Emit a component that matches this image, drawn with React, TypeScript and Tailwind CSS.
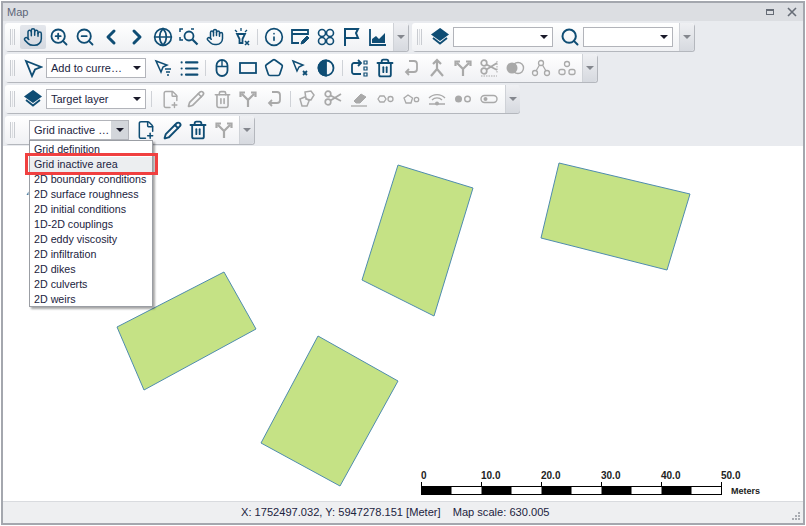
import type { ReactNode } from 'react';
import { ChevronLeft, ChevronRight, Globe, Hand, Info, List, Pencil, Search, Trash2, ZoomIn, ZoomOut, Pentagon, FilePlus2 } from 'lucide-react';

const menuItems = [
  'Grid definition',
  'Grid inactive area',
  '2D boundary conditions',
  '2D surface roughness',
  '2D initial conditions',
  '1D-2D couplings',
  '2D eddy viscosity',
  '2D infiltration',
  '2D dikes',
  '2D culverts',
  '2D weirs',
];

function Svg({ children }: { children: ReactNode }) {
  return (
    <svg viewBox="0 0 20 20" width="20" height="20" fill="none" stroke="currentColor" strokeWidth="1.8">
      {children}
    </svg>
  );
}

function Btn({ children, off, active }: { children: ReactNode; off?: boolean; active?: boolean }) {
  return (
    <div
      className={`w-[26px] h-[24px] flex items-center justify-center shrink-0 ${off ? 'text-[#a9a9a9]' : 'text-[#0f4d74]'} ${active ? 'bg-gradient-to-b from-[#e4e7ec] to-[#d5d9e0] rounded-[2px]' : ''}`}
    >
      {children}
    </div>
  );
}

function Sep({ w = 7 }: { w?: number }) {
  return (
    <div className={`flex justify-center shrink-0 ${w === 11 ? 'w-[11px]' : 'w-[7px]'}`}>
      <div className="w-px h-[16px] bg-[#cfd2d7]" />
    </div>
  );
}

function Arrow({ gray }: { gray?: boolean }) {
  return (
    <div
      className={`w-0 h-0 border-l-[4px] border-r-[4px] border-t-[4px] border-l-transparent border-r-transparent ${gray ? 'border-t-[#84878e]' : 'border-t-[#1a1a2a]'}`}
    />
  );
}

function Toolbar({ children, className }: { children: ReactNode; className?: string }) {
  return (
    <div className={`h-[28px] flex items-center rounded-[3px] bg-gradient-to-b from-white to-[#f0f1f4] shadow-[1px_1px_0_#b4b7bd] ${className ?? ''}`}>
      <div className="w-[15px] h-full shrink-0 flex items-center justify-center gap-px">
        <div className="w-px h-[16px] bg-[#c9ccd1]" />
        <div className="w-px h-[16px] bg-[#dcdee2]" />
        <div className="w-px h-[16px] bg-[#c9ccd1]" />
      </div>
      {children}
    </div>
  );
}

function More({ className }: { className?: string }) {
  return (
    <div className={`w-[15px] h-full shrink-0 flex items-center justify-center border-l border-[#cfd2d7] rounded-r-[3px] bg-gradient-to-b from-[#eff0f3] to-[#d6d9df] ${className ?? ''}`}>
      <Arrow gray />
    </div>
  );
}

function Combo({ text, w = 'w-[100px]', button }: { text?: string; w?: string; button?: boolean }) {
  return (
    <div className={`${w} h-[20px] shrink-0 flex items-center bg-white border border-[#b2b4ba] text-[11px] text-[#1b2340]`}>
      <span className="flex-1 min-w-0 pl-[4px] whitespace-nowrap">{text}</span>
      <div className={`w-[17px] h-full shrink-0 flex items-center justify-center ${button ? 'bg-[#d3d6db]' : ''}`}>
        <Arrow />
      </div>
    </div>
  );
}

const LayersIco = () => (
  <Svg>
    <path d="M10 2 17.500 7.500 10 13 2.500 7.500Z" fill="currentColor" />
    <path d="M3 11 10 16.500 17 11" />
  </Svg>
);
const SplitIco = () => (
  <Svg>
    <path d="M10 18v-7L4 5M10 11l6-6M2.500 8V3.500H7M17.500 8V3.500H13" strokeWidth="2.200" />
  </Svg>
);
const UndoIco = () => (
  <Svg>
    <path d="M8 3h5a3 3 0 0 1 3 3v5a3 3 0 0 1-3 3H5M8 11l-3 3 3 3" />
  </Svg>
);
const ScissorsIco = ({ dashed }: { dashed?: boolean }) => (
  <Svg>
    <circle cx="5" cy="5" r="2.800" strokeWidth="1.700" />
    <circle cx="5" cy="13" r="2.800" strokeWidth="1.700" />
    <path d="M7.500 6.500 18 12M7.500 11.500 18 5" strokeWidth="1.800" />
    {dashed && <path d="M2 18h16M18 3v12" strokeWidth="1" strokeDasharray="1.500 1" />}
  </Svg>
);

export default function App() {
  return (
    <div className="w-[806px] h-[526px] bg-white p-px font-['Liberation_Sans',Arial,sans-serif]">
      <div className="w-full h-full border-2 border-[#a4a7ae] flex flex-col overflow-hidden">
        <div className="h-[18px] shrink-0 bg-[#dcdee2] flex items-center pl-[4px] pr-[4px] text-[11px] text-[#5c6678]">
          <span className="flex-1">Map</span>
          <div className="w-[8px] h-[6px] border border-t-2 border-[#666c76] mr-[13px]" />
          <svg viewBox="0 0 10 10" width="10" height="10" className="mr-[2px]" stroke="#666c76" strokeWidth="1.600">
            <path d="M1 1 9 9M9 1 1 9" />
          </svg>
        </div>

        <div className="h-[125px] shrink-0 bg-[#e9ebef] pl-[2px] pt-[2px] flex flex-col gap-[3px]">
          <div className="flex gap-[4px]">
            <Toolbar>
              <Btn active><Hand size={20} strokeWidth={1.800} /></Btn>
              <Btn><ZoomIn size={20} strokeWidth={2.200} /></Btn>
              <Btn><ZoomOut size={20} strokeWidth={2.200} /></Btn>
              <Btn><ChevronLeft size={24} strokeWidth={3} /></Btn>
              <Btn><ChevronRight size={24} strokeWidth={3} /></Btn>
              <Btn><Globe size={20} strokeWidth={2} /></Btn>
              <Btn>
                <Svg>
                  <path d="M1 5V2h3M12 2h3M1 10v3h3" strokeWidth="1.500" />
                  <circle cx="10" cy="9" r="4.500" />
                  <path d="m13.500 12.500 5 5" strokeWidth="2.200" />
                </Svg>
              </Btn>
              <Btn><Hand size={18} strokeWidth={2} /></Btn>
              <Btn>
                <Svg>
                  <path d="M6 7h8l-2.500 5v4h-3v-4Z" />
                  <path d="M10 1v3M4 3l2 2M16 3l-2 2" strokeWidth="1.300" />
                  <path d="m14 14 4 4M18 14l-4 4" strokeWidth="1.600" />
                </Svg>
              </Btn>
              <Sep />
              <Btn><Info size={20} strokeWidth={2} /></Btn>
              <Btn>
                <Svg>
                  <path d="M9 16H2V3h16v5M2 7h16" />
                  <path d="m11 17 1-3 5-5 2 2-5 5Z" fill="currentColor" strokeWidth="1" />
                </Svg>
              </Btn>
              <Btn>
                <Svg>
                  <circle cx="6" cy="6" r="3.500" strokeWidth="1.600" />
                  <circle cx="14" cy="6" r="3.500" strokeWidth="1.600" />
                  <circle cx="6" cy="14" r="3.500" strokeWidth="1.600" />
                  <circle cx="14" cy="14" r="3.500" strokeWidth="1.600" />
                </Svg>
              </Btn>
              <Btn>
                <Svg>
                  <path d="M3 19V2h13l-2 4 2 5H3" strokeWidth="2" />
                </Svg>
              </Btn>
              <Btn>
                <Svg>
                  <path d="M2 2v16h16" />
                  <path d="M4 16v-4l4-3 3 3 6-6v10Z" fill="currentColor" stroke="none" />
                </Svg>
              </Btn>
              <More className="ml-[2px]" />
            </Toolbar>
            <Toolbar>
              <Btn><LayersIco /></Btn>
              <Combo />
              <div className="w-[4px]" />
              <Btn><Search size={20} strokeWidth={2.400} /></Btn>
              <Combo w="w-[90px]" />
              <More className="ml-[6px]" />
            </Toolbar>
          </div>

          <Toolbar className="w-[592px]">
            <Btn>
              <Svg>
                <path d="M3 3 18 9l-6 2.500L9 18Z" />
              </Svg>
            </Btn>
            <Combo text="Add to curre…" />
            <div className="w-[5px]" />
            <Btn>
              <Svg>
                <path d="M3 3 14 7l-4 2-2 5Z" strokeWidth="1.500" />
                <path d="M12 11h6M13 14h4M14 17h2" strokeWidth="1.400" />
              </Svg>
            </Btn>
            <Btn><List size={21} strokeWidth={2.400} /></Btn>
            <Sep />
            <Btn>
              <Svg>
                <rect x="4.500" y="2" width="11" height="16" rx="5.500" />
                <path d="M10 2v6M5 8.500h10" strokeWidth="1.400" />
              </Svg>
            </Btn>
            <Btn>
              <Svg>
                <rect x="2" y="5" width="16" height="10" />
              </Svg>
            </Btn>
            <Btn><Pentagon size={20} strokeWidth={2} /></Btn>
            <Btn>
              <Svg>
                <path d="M3 3 13 7l-4 2-2 4Z" strokeWidth="1.500" />
                <path d="m13 13 4 4M17 13l-4 4" />
              </Svg>
            </Btn>
            <Btn>
              <Svg>
                <circle cx="10" cy="10" r="7.500" />
                <path d="M10 2.500a7.500 7.500 0 0 0 0 15Z" fill="currentColor" />
              </Svg>
            </Btn>
            <Sep />
            <Btn>
              <Svg>
                <path d="M12 16H5a2 2 0 0 1-2-2V7a2 2 0 0 1 2-2h7M9 2l3 3-3 3" />
                <path d="M15 3h3v3h-3zM15 9h3v3h-3zM15 15h3v3h-3z" strokeWidth="1.200" />
              </Svg>
            </Btn>
            <Btn><Trash2 size={20} strokeWidth={2.200} /></Btn>
            <Btn off><UndoIco /></Btn>
            <Btn off>
              <Svg>
                <path d="M10 2v9L4 18M10 11l6 7M6 6l4-4 4 4" strokeWidth="2.200" />
              </Svg>
            </Btn>
            <Btn off><SplitIco /></Btn>
            <Btn off><ScissorsIco dashed /></Btn>
            <Btn off>
              <Svg>
                <circle cx="7" cy="10" r="5.500" fill="currentColor" stroke="none" />
                <circle cx="13" cy="10" r="5.500" strokeWidth="1.400" />
              </Svg>
            </Btn>
            <Btn off>
              <Svg>
                <path d="M8.500 7 5 13M11.500 7l3.500 6" strokeWidth="1.300" />
                <circle cx="10" cy="5" r="2.500" strokeWidth="1.300" />
                <circle cx="4" cy="15" r="2.500" strokeWidth="1.300" />
                <circle cx="16" cy="15" r="2.500" strokeWidth="1.300" />
              </Svg>
            </Btn>
            <Btn off>
              <Svg>
                <circle cx="10" cy="6" r="2.500" strokeWidth="1.300" />
                <rect x="2" y="11.500" width="6" height="5" strokeWidth="1.300" rx="2" />
                <rect x="12" y="11.500" width="6" height="5" strokeWidth="1.300" rx="2" />
              </Svg>
            </Btn>
            <More className="ml-[2px]" />
          </Toolbar>

          <Toolbar className="w-[514px]">
            <Btn><LayersIco /></Btn>
            <Combo text="Target layer" />
            <Sep w={11} />
            <Btn off><FilePlus2 size={19} strokeWidth={1.800} /></Btn>
            <Btn off><Pencil size={18} strokeWidth={2.200} /></Btn>
            <Btn off><Trash2 size={19} strokeWidth={2} /></Btn>
            <Btn off><SplitIco /></Btn>
            <Btn off><UndoIco /></Btn>
            <Sep />
            <Btn off>
              <Svg>
                <path d="m8 3 6-1 3 4-3 5-5-1ZM3 10l5-2 4 4-2 5-5 0Z" strokeWidth="1.500" />
              </Svg>
            </Btn>
            <Btn off><ScissorsIco /></Btn>
            <Btn off>
              <Svg>
                <path d="m5 12 7-7 5 3-6 6H7Z" fill="currentColor" strokeWidth="1" />
                <path d="M2 17h16" strokeWidth="1.300" />
              </Svg>
            </Btn>
            <Btn off>
              <Svg>
                <path d="m3 10 2-3h4l2 3-2 3H5Z" strokeWidth="1.300" />
                <circle cx="15.500" cy="10" r="2.500" strokeWidth="1.300" />
              </Svg>
            </Btn>
            <Btn off>
              <Svg>
                <path d="m7 6 4.500 3-1.500 5H5L3 9Z" strokeWidth="1.300" />
                <circle cx="15.500" cy="10.500" r="2.200" strokeWidth="1.300" />
              </Svg>
            </Btn>
            <Btn off>
              <Svg>
                <path d="M2 9a11 11 0 0 1 16 0M5 11a7 7 0 0 1 10 0M2 15h16" strokeWidth="1.300" />
                <circle cx="10" cy="14.500" r="2" fill="currentColor" stroke="none" />
              </Svg>
            </Btn>
            <Btn off>
              <Svg>
                <circle cx="5.500" cy="10" r="3.500" fill="currentColor" stroke="none" />
                <circle cx="14.500" cy="10" r="2.800" strokeWidth="1.400" />
              </Svg>
            </Btn>
            <Btn off>
              <Svg>
                <rect x="2" y="6.500" width="16" height="7" rx="3.500" strokeWidth="1.400" />
                <circle cx="6.500" cy="10" r="2" fill="currentColor" stroke="none" />
              </Svg>
            </Btn>
            <More className="ml-[3px]" />
          </Toolbar>

          <Toolbar className="w-[249px]">
            <div className="w-[9px]" />
            <Combo text="Grid inactive …" button />
            <div className="w-[4px]" />
            <Btn><FilePlus2 size={20} strokeWidth={1.800} /></Btn>
            <Btn><Pencil size={19} strokeWidth={2.400} /></Btn>
            <Btn><Trash2 size={20} strokeWidth={2.200} /></Btn>
            <Btn off><SplitIco /></Btn>
            <More className="ml-[2px]" />
          </Toolbar>
        </div>

        <div className="relative flex-1 bg-white">
          <svg width="802" height="355" viewBox="3 146 802 355" className="block">
            <g fill="#c5e285" stroke="#4f8cae" strokeWidth="1">
              <polygon points="398,165 473,188 434,316 362,280" />
              <polygon points="559,163 690,194 667,270 541,238" />
              <polygon points="224,272 256,329 144,390 117,327" />
              <polygon points="318,336 398,381 340,486 261,443" />
            </g>
            <path d="M26.500 195 28.500 191.500V195Z" fill="#4f7fa0" />
            <rect x="421.500" y="486.500" width="300" height="8" fill="#fff" stroke="#000" />
            <path d="M421.500 486h30v9h-30zM481.500 486h30v9h-30zM541.500 486h30v9h-30zM601.500 486h30v9h-30zM661.500 486h30v9h-30z" fill="#000" />
            <path d="M421.500 482v5M481.500 482v5M541.500 482v5M601.500 482v5M661.500 482v5M721.500 482v5" stroke="#000" />
          </svg>

          <div className="absolute left-[418px] top-[324px] text-[10px] leading-[12px] font-bold text-[#222]">0</div>
          <div className="absolute left-[478px] top-[324px] text-[10px] leading-[12px] font-bold text-[#222]">10.0</div>
          <div className="absolute left-[538px] top-[324px] text-[10px] leading-[12px] font-bold text-[#222]">20.0</div>
          <div className="absolute left-[598px] top-[324px] text-[10px] leading-[12px] font-bold text-[#222]">30.0</div>
          <div className="absolute left-[658px] top-[324px] text-[10px] leading-[12px] font-bold text-[#222]">40.0</div>
          <div className="absolute left-[718px] top-[324px] text-[10px] leading-[12px] font-bold text-[#222]">50.0</div>
          <div className="absolute left-[728px] top-[339px] text-[9px] leading-[12px] font-bold text-[#222]">Meters</div>

          <div className="absolute left-[26px] top-[-6px] w-[124px] h-[167px] bg-white border border-[#9b9ea4] shadow-[2px_2px_2px_rgba(0,0,0,0.35)] text-[10.7px] leading-[15px] text-[#1b2340] pt-[1px]">
            {menuItems.map((item) => (
              <div key={item} className={`h-[15px] pl-[4px] whitespace-nowrap ${item === 'Grid inactive area' ? 'bg-[#eceef0]' : ''}`}>
                {item}
              </div>
            ))}
          </div>
          <div className="absolute left-[22px] top-[7px] w-[133px] h-[22px] border-[3px] border-[#f04040]" />
        </div>

        <div className="relative h-[22px] shrink-0 bg-[#eeeff1] border-t border-[#d9dbdf] flex items-center pl-[238px] text-[11.1px] text-[#1b2340]">
          <span>X: 1752497.032, Y: 5947278.151 [Meter]</span>
          <span className="ml-[12px]">Map scale: 630.005</span>
          <svg width="10" height="10" className="absolute right-[2px] bottom-[2px]" fill="#a9acb2">
            <path d="M7 1h2v2H7zM4 4h2v2H4zM7 4h2v2H7zM1 7h2v2H1zM4 7h2v2H4zM7 7h2v2H7z" />
          </svg>
        </div>
      </div>
    </div>
  );
}
